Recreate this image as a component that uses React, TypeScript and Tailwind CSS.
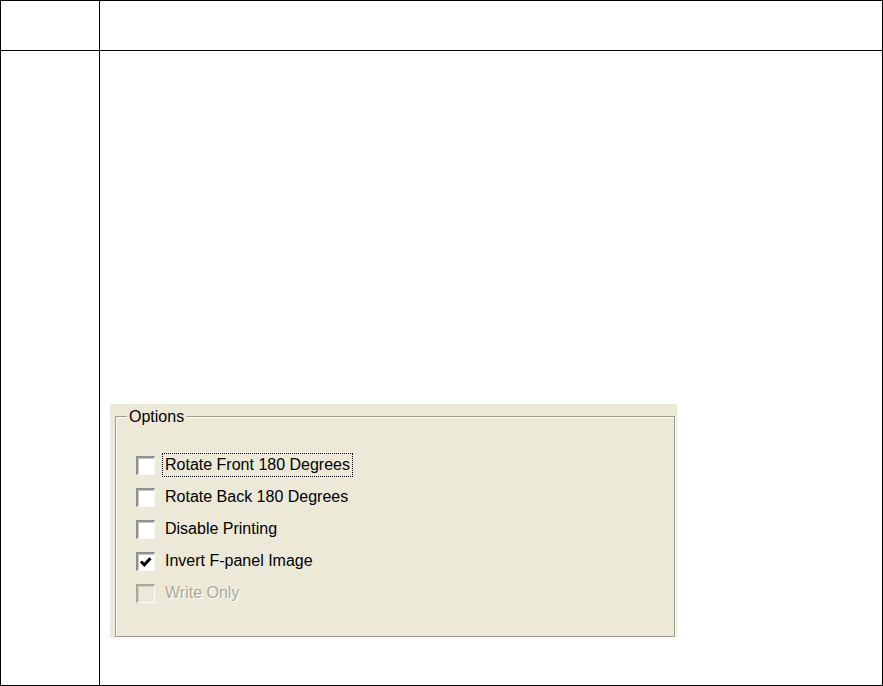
import { ReactNode } from 'react';

interface OptionRowProps {
  label: string;
  checked?: boolean;
  disabled?: boolean;
  focused?: boolean;
}

function CheckBox({ checked, disabled }: { checked?: boolean; disabled?: boolean }) {
  return (
    <div
      className={`w-[19px] h-[19px] shrink-0 flex items-center justify-center border-t-2 border-l-2 border-b border-r ${
        disabled
          ? 'bg-[#ECE9D8] border-t-[#aca899] border-l-[#aca899] border-b-white border-r-white shadow-[inset_1px_1px_0_#d6d3c3]'
          : 'bg-white border-t-[#8e8e8e] border-l-[#8e8e8e] border-b-[#f6f6f6] border-r-[#f6f6f6] shadow-[inset_1px_1px_0_#c9c9c9]'
      }`}
    >
      {checked && (
        <svg width="14" height="14" viewBox="0 0 14 14">
          <path
            d="M2 6.5 L5.3 9.8 L11.5 3.2"
            fill="none"
            stroke={disabled ? '#aca899' : '#000'}
            strokeWidth="3"
            strokeLinejoin="miter"
          />
        </svg>
      )}
    </div>
  );
}

function OptionRow({ label, checked, disabled, focused }: OptionRowProps) {
  return (
    <div className="h-[32px] flex items-center gap-[7px]">
      <CheckBox checked={checked} disabled={disabled} />
      <span
        className={`h-[24px] flex items-center px-[2px] border leading-[18px] ${
          focused ? 'border-dotted border-black' : 'border-transparent'
        } ${disabled ? 'text-[#aca899] [text-shadow:1px_1px_0_#ffffff]' : 'text-black'}`}
      >
        {label}
      </span>
    </div>
  );
}

function GroupBox({ title, children }: { title: string; children: ReactNode }) {
  return (
    <div className="relative h-[221px] border border-[#9f9c8c] shadow-[inset_1px_1px_0_#ffffff,1px_1px_0_#ffffff] pl-[20px] pt-[32px]">
      <span className="absolute left-[11px] top-[-9px] px-[2px] bg-[#ECE9D8] leading-[18px] text-black">
        {title}
      </span>
      {children}
    </div>
  );
}

export default function App() {
  const options: OptionRowProps[] = [
    { label: 'Rotate Front 180 Degrees', focused: true },
    { label: 'Rotate Back 180 Degrees' },
    { label: 'Disable Printing' },
    { label: 'Invert F-panel Image', checked: true },
    { label: 'Write Only', disabled: true },
  ];

  return (
    <div
      className="w-[883px] h-[686px] bg-white border border-black flex flex-col text-[16px]"
      style={{ fontFamily: '"Liberation Sans", Arial, sans-serif' }}
    >
      {/* Header row */}
      <div className="flex h-[50px] border-b border-black">
        <div className="w-[99px] border-r border-black" />
        <div className="flex-1" />
      </div>

      {/* Body row */}
      <div className="flex flex-1">
        <div className="w-[99px] border-r border-black" />
        <div className="flex-1 pl-[10px] pt-[353px]">
          {/* Options dialog capture */}
          <div className="w-[567px] h-[234px] bg-[#ECE9D8] pl-[5px] pr-[2px] pt-[12px] pb-[1px]">
            <GroupBox title="Options">
              {options.map((o) => (
                <OptionRow key={o.label} {...o} />
              ))}
            </GroupBox>
          </div>
        </div>
      </div>
    </div>
  );
}
